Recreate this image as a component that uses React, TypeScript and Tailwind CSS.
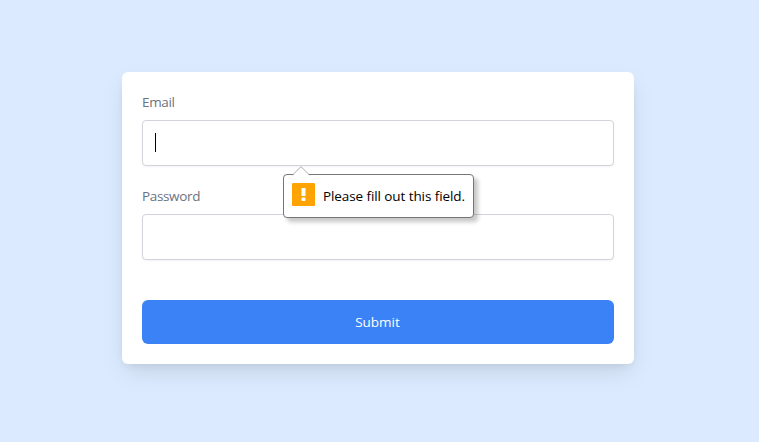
function ValidationBubble() {
  return (
    <div
      role="alert"
      className="absolute left-[141px] top-[54px] z-10 flex h-[44px] w-[191px] items-center gap-2 rounded-[4px] border border-[#767676] bg-white pl-2 shadow-[4px_4px_4px_rgba(0,0,0,0.22)]"
    >
      <svg className="absolute -top-[9px] left-[8px]" width="18" height="10" viewBox="0 0 18 10" fill="none">
        <path d="M0.5 9.5L9 1L17.5 9.5V10H0.5Z" fill="white" />
        <path d="M0.5 9L9 0.7L17.5 9" stroke="#adadad" strokeWidth="1" />
      </svg>
      <svg className="mb-[3px] shrink-0" width="23" height="23" viewBox="0 0 23 23">
        <rect width="23" height="23" rx="1" fill="#ffa300" />
        <rect x="9.5" y="5" width="4" height="8" fill="white" />
        <rect x="9.5" y="14.5" width="4" height="3.5" rx="1" fill="white" />
      </svg>
      <span className="whitespace-nowrap text-[13.5px] leading-5 tracking-[-0.09px] text-black">
        Please fill out this field.
      </span>
    </div>
  );
}

function Field({ id, label, type, active = false }: { id: string; label: string; type: string; active?: boolean }) {
  return (
    <div className="relative flex flex-col gap-2">
      <label htmlFor={id} className="self-start text-[13.5px] leading-5 tracking-[-0.35px] text-[#6b7280]">
        {label}
      </label>
      <div className="relative">
        <input
          id={id}
          type={type}
          required
          className="block h-[46px] w-full rounded border border-[#d1d5db] bg-white px-3 text-sm shadow-[0_1px_2px_rgba(0,0,0,0.05)] outline-none"
        />
        {active && <span className="absolute left-[13px] top-[13px] h-[19px] w-px bg-black" />}
        {active && <ValidationBubble />}
      </div>
    </div>
  );
}

export default function App() {
  return (
    <main className="flex h-[442px] w-full justify-center bg-[#dbeafe] pr-[3px] pt-[72px] font-['Open_Sans','Noto_Sans',sans-serif]">
      <form
        noValidate
        className="flex h-[292px] w-[512px] flex-col gap-5 rounded-md bg-white p-5 shadow-[0_10px_25px_-3px_rgba(0,0,0,0.1),0_4px_10px_-4px_rgba(0,0,0,0.1)]"
      >
        <Field id="email" label="Email" type="email" active />
        <Field id="password" label="Password" type="password" />
        <button
          type="submit"
          className="mt-5 h-[44px] rounded-md bg-[#3b82f6] pr-px text-[13.5px] leading-5 text-white"
        >
          Submit
        </button>
      </form>
    </main>
  );
}
